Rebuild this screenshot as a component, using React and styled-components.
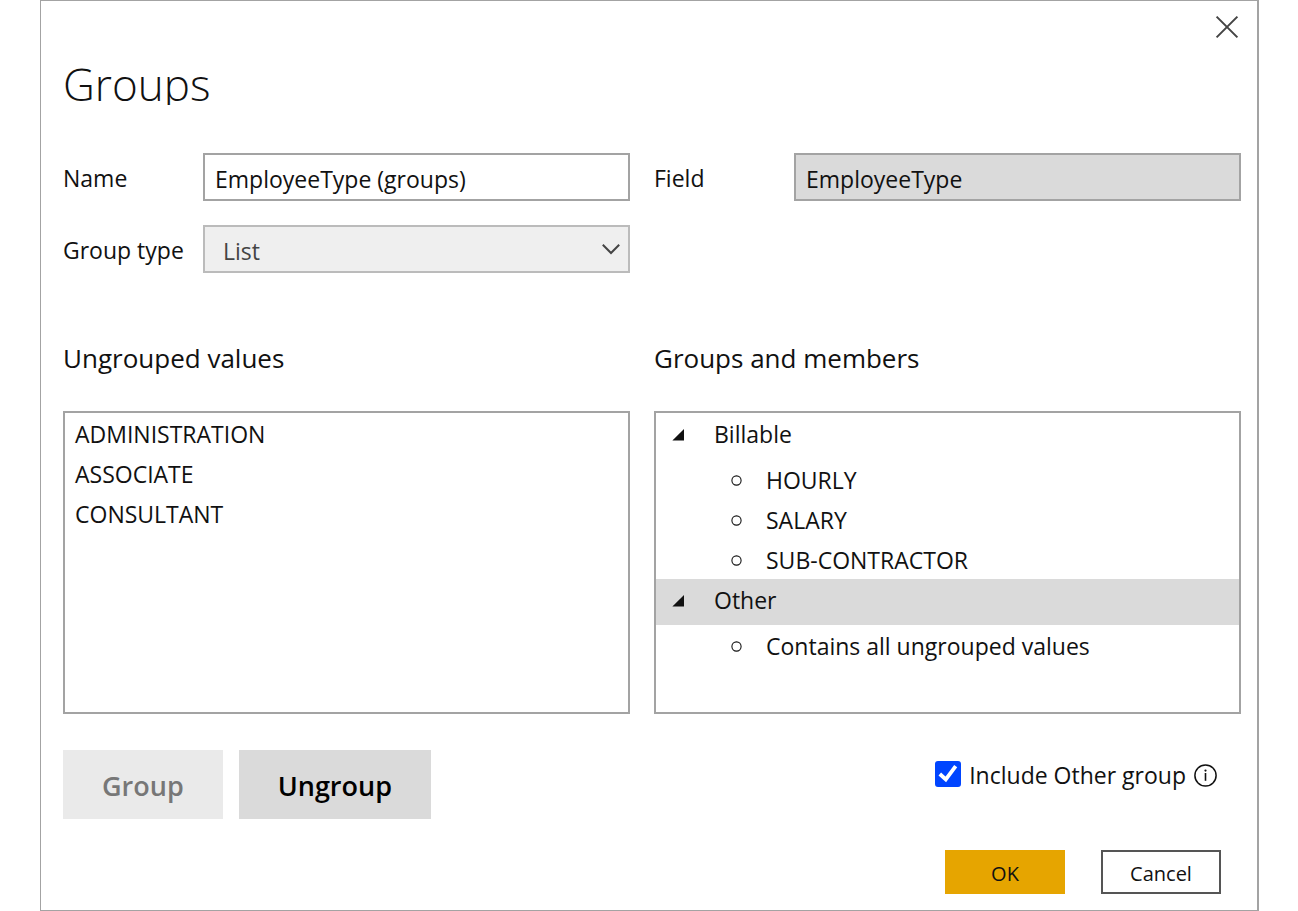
import React, { useState } from "react";
import styled, { createGlobalStyle } from "styled-components";

const GlobalStyle = createGlobalStyle`
  *, *::before, *::after { box-sizing: border-box; }
  body { margin: 0; background: #fff; }
  body, button, input, select { font-family: "Open Sans", "Noto Sans", sans-serif; }
`;

const Dialog = styled.main`
  display: flex;
  flex-direction: column;
  min-height: 100vh;
  margin: 0 39px 0 40px;
  padding: 0 16px 16px 22px;
  border: solid #a3a3a3;
  border-width: 1px 2px 1px 1px;
  background: #fff;
  color: #111;
  font-size: 23px;
`;

const TitleBar = styled.div`
  display: flex;
  justify-content: flex-end;
  height: 52px;
`;

const CloseButton = styled.button`
  width: 28px;
  height: 52px;
  padding: 0;
  border: 0;
  background: none;
  color: #444;
  cursor: pointer;

  svg { display: block; }
`;

const Title = styled.h1`
  height: 52px;
  margin: 0 0 48px;
  overflow: hidden;
  font-size: 44px;
  font-weight: 300;
  line-height: 62px;
`;

const Columns = styled.div`
  display: grid;
  grid-template-columns: 567fr 587fr;
  gap: 24px;
`;

const Field = styled.div`
  display: grid;
  grid-template-columns: 140px 1fr;
  align-items: center;
  height: 48px;
`;

const FieldLabel = styled.label`
  padding-top: 2px;
  line-height: 32px;
`;

const TextInput = styled.input`
  width: 100%;
  height: 48px;
  padding: 3px 10px 0;
  border: 2px solid #a3a3a3;
  border-radius: 0;
  background: ${({ readOnly }) => (readOnly ? "#dadada" : "#fff")};
  color: #111;
  font-size: 23px;
  outline: 0;
`;

const SelectWrap = styled.div`
  position: relative;

  svg {
    position: absolute;
    top: 18px;
    right: 10px;
    pointer-events: none;
  }
`;

const Select = styled.select`
  display: block;
  width: 100%;
  height: 48px;
  padding: 3px 40px 0 18px;
  border: 2px solid #bbb;
  border-radius: 0;
  background: #efefef;
  color: #444;
  font-size: 23px;
  opacity: 1;
  appearance: none;
`;

const Panels = styled(Columns)`
  margin-top: 64px;
`;

const PanelTitle = styled.h2`
  margin: 0 0 32px;
  font-size: 26px;
  font-weight: 400;
  line-height: 42px;
`;

const ListBox = styled.div`
  height: 303px;
  overflow: auto;
  border: 2px solid #a3a3a3;
`;

const List = styled.ul`
  margin: 0;
  padding: 0;
  list-style: none;
`;

const Value = styled.li`
  height: 40px;
  padding: 3px 10px 0;
  line-height: 36px;
`;

const GroupRow = styled.button`
  display: flex;
  align-items: center;
  width: 100%;
  height: 46px;
  padding: 3px 16px 7px;
  border: 0;
  background: ${({ $selected }) => ($selected ? "#dadada" : "transparent")};
  color: #111;
  font-size: 23px;
  line-height: 36px;
  text-align: left;

  svg { margin: 2px 29px 0 0; }
`;

const Member = styled.li`
  display: flex;
  align-items: center;
  gap: 24px;
  height: 40px;
  padding: 2px 0 0 75px;
  line-height: 36px;

  svg { margin-top: 1px; }
`;

const Footer = styled.div`
  display: flex;
  justify-content: space-between;
  align-items: flex-start;
  margin-top: 36px;
`;

const Actions = styled.div`
  display: flex;
  gap: ${({ $gap }) => $gap};
`;

const GroupButton = styled.button`
  height: 69px;
  padding: 2px 39px 0;
  border: 0;
  background: #dadada;
  color: #000;
  font-size: 27px;
  font-weight: 600;

  &:disabled {
    background: #eaeaea;
    color: #777;
  }
`;

const IncludeOther = styled.div`
  display: flex;
  align-items: center;
  gap: 8px;
  height: 48px;
  margin-right: 24px;

  label { padding-top: 2px; }
`;

const CheckWrap = styled.span`
  position: relative;
  display: block;
  width: 26px;
  height: 26px;

  svg {
    position: absolute;
    inset: 0;
    pointer-events: none;
  }
`;

const Checkbox = styled.input`
  display: block;
  width: 26px;
  height: 26px;
  margin: 0;
  border: 2px solid #0045ff;
  border-radius: 3px;
  background: ${({ checked }) => (checked ? "#0045ff" : "#fff")};
  appearance: none;
`;

const InfoButton = styled.button`
  padding: 2px 0 0;
  border: 0;
  background: none;
  color: #111;

  svg { display: block; }
`;

const DialogActions = styled(Actions)`
  justify-content: flex-end;
  margin: 31px 20px 0 0;
`;

const DialogButton = styled.button`
  width: 120px;
  height: 44px;
  padding: 3px 0 0;
  border: 2px solid ${({ $primary }) => ($primary ? "#e6a500" : "#555")};
  background: ${({ $primary }) => ($primary ? "#e6a500" : "#fff")};
  color: #111;
  font-size: 20px;
`;

const ungrouped = ["ADMINISTRATION", "ASSOCIATE", "CONSULTANT"];
const groups = [
  { name: "Billable", members: ["HOURLY", "SALARY", "SUB-CONTRACTOR"] },
  { name: "Other", members: ["Contains all ungrouped values"] },
];

const CloseIcon = () => (
  <svg width="28" height="52" viewBox="0 0 28 52" fill="none" stroke="currentColor" strokeWidth="2" aria-hidden="true">
    <path d="M3.6 15.6l20.8 20.8M24.4 15.6l-20.8 20.8" />
  </svg>
);

const ChevronIcon = () => (
  <svg width="18" height="12" viewBox="0 0 18 12" fill="none" stroke="#444" strokeWidth="2" aria-hidden="true">
    <path d="M.8 1.8l8.2 8.2 8.2-8.2" />
  </svg>
);

const ExpandedIcon = () => (
  <svg width="13" height="12" viewBox="0 0 13 12" fill="#111" aria-hidden="true">
    <path d="M12 0v11.5H.4z" />
  </svg>
);

const BulletIcon = () => (
  <svg width="11" height="11" viewBox="0 0 11 11" fill="none" stroke="#111" strokeWidth="1.1" aria-hidden="true">
    <circle cx="5.5" cy="5.5" r="4.6" />
  </svg>
);

const CheckIcon = () => (
  <svg width="26" height="26" viewBox="0 0 26 26" fill="none" stroke="#fff" strokeWidth="3.8" aria-hidden="true">
    <path d="M4.8 13l6 5.5L20.7 5.2" />
  </svg>
);

const InfoIcon = () => (
  <svg width="23" height="23" viewBox="0 0 23 23" fill="none" stroke="currentColor" aria-hidden="true">
    <circle cx="11.5" cy="11.5" r="10.6" strokeWidth="1.5" />
    <path d="M11.5 9v7.8" strokeWidth="1.6" />
    <circle cx="11.5" cy="6.6" r="1.1" fill="currentColor" stroke="none" />
  </svg>
);

export default function App() {
  const [name, setName] = useState("EmployeeType (groups)");
  const [includeOther, setIncludeOther] = useState(true);
  const [selected, setSelected] = useState("Other");

  return (
    <>
      <GlobalStyle />
      <Dialog>
        <TitleBar>
          <CloseButton type="button" aria-label="Close">
            <CloseIcon />
          </CloseButton>
        </TitleBar>
        <Title>Groups</Title>
        <Columns>
          <Field>
            <FieldLabel htmlFor="name">Name</FieldLabel>
            <TextInput id="name" value={name} onChange={(e) => setName(e.target.value)} />
          </Field>
          <Field>
            <FieldLabel htmlFor="field">Field</FieldLabel>
            <TextInput id="field" value="EmployeeType" readOnly />
          </Field>
          <Field>
            <FieldLabel htmlFor="type">Group type</FieldLabel>
            <SelectWrap>
              <Select id="type" disabled defaultValue="List">
                <option>List</option>
              </Select>
              <ChevronIcon />
            </SelectWrap>
          </Field>
        </Columns>
        <Panels>
          <section>
            <PanelTitle>Ungrouped values</PanelTitle>
            <ListBox>
              <List>
                {ungrouped.map((value) => (
                  <Value key={value}>{value}</Value>
                ))}
              </List>
            </ListBox>
          </section>
          <section>
            <PanelTitle>Groups and members</PanelTitle>
            <ListBox>
              {groups.map((group) => (
                <div key={group.name}>
                  <GroupRow
                    type="button"
                    aria-expanded="true"
                    $selected={selected === group.name}
                    onClick={() => setSelected(group.name)}
                  >
                    <ExpandedIcon />
                    {group.name}
                  </GroupRow>
                  <List>
                    {group.members.map((member) => (
                      <Member key={member}>
                        <BulletIcon />
                        {member}
                      </Member>
                    ))}
                  </List>
                </div>
              ))}
            </ListBox>
          </section>
        </Panels>
        <Footer>
          <Actions $gap="16px">
            <GroupButton type="button" disabled>Group</GroupButton>
            <GroupButton type="button">Ungroup</GroupButton>
          </Actions>
          <IncludeOther>
            <CheckWrap>
              <Checkbox
                id="include-other"
                type="checkbox"
                checked={includeOther}
                onChange={(e) => setIncludeOther(e.target.checked)}
              />
              {includeOther && <CheckIcon />}
            </CheckWrap>
            <label htmlFor="include-other">Include Other group</label>
            <InfoButton type="button" aria-label="More information">
              <InfoIcon />
            </InfoButton>
          </IncludeOther>
        </Footer>
        <DialogActions $gap="36px">
          <DialogButton type="button" $primary>OK</DialogButton>
          <DialogButton type="button">Cancel</DialogButton>
        </DialogActions>
      </Dialog>
    </>
  );
}
